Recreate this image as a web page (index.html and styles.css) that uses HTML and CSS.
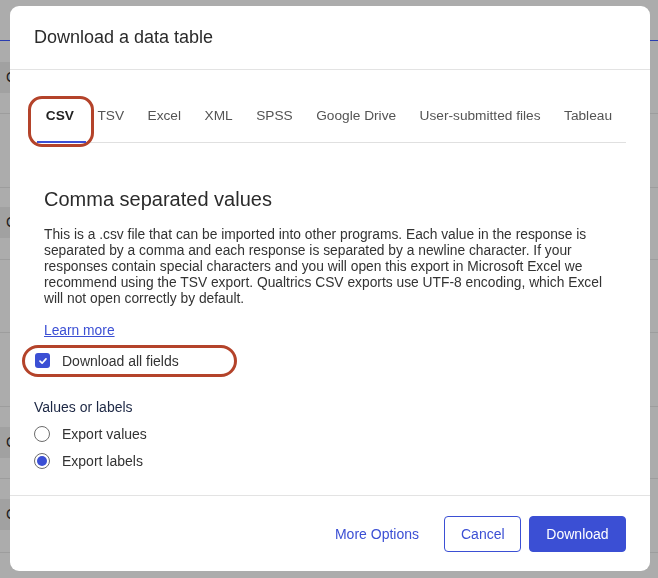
FILE: index.html
```html
<!DOCTYPE html>
<html lang="en">
<head>
  <meta charset="UTF-8">
  <meta name="viewport" content="width=device-width, initial-scale=1.0">
  <title>Download a data table</title>
  <link rel="stylesheet" href="styles.css">
</head>
<body>

<div class="page">
  <div class="page-top"></div>
  <div class="page-row r1"><div class="band">Col</div></div>
  <div class="page-row r2"></div>
  <div class="page-row r3"><div class="band">Col</div></div>
  <div class="page-row r4"></div>
  <div class="page-row r5"></div>
  <div class="page-row r6"><div class="band">Col</div></div>
  <div class="page-row r7"><div class="band">Col</div></div>
</div>

<div class="overlay">
  <div class="modal">
    <div class="modal-header">
      <h1>Download a data table</h1>
    </div>

    <div class="modal-body">
      <ul class="tabs">
        <li class="tab active">CSV<span class="mark mark-tab"></span></li>
        <li class="tab">TSV</li>
        <li class="tab">Excel</li>
        <li class="tab">XML</li>
        <li class="tab">SPSS</li>
        <li class="tab">Google Drive</li>
        <li class="tab">User-submitted files</li>
        <li class="tab">Tableau</li>
      </ul>

      <div class="panel">
        <h2>Comma separated values</h2>
        <p>This is a .csv file that can be imported into other programs. Each value in the response is separated by a comma and each response is separated by a newline character. If your responses contain special characters and you will open this export in Microsoft Excel we recommend using the TSV export. Qualtrics CSV exports use UTF-8 encoding, which Excel will not open correctly by default.</p>
        <a href="#" class="learn">Learn more</a>
      </div>

      <label class="option check-row">
        <span class="checkbox">
          <svg width="10" height="10" viewBox="0 0 10 10"><path d="M2 5.2 L4.1 7.2 L8 2.9" fill="none" stroke="#fff" stroke-width="1.7" stroke-linecap="round" stroke-linejoin="round"/></svg>
        </span>
        Download all fields
        <span class="mark mark-check"></span>
      </label>

      <div class="group-label">Values or labels</div>
      <label class="option"><span class="radio"></span>Export values</label>
      <label class="option"><span class="radio on"></span>Export labels</label>
    </div>

    <div class="modal-footer">
      <a href="#" class="more">More Options</a>
      <button class="btn btn-outline">Cancel</button>
      <button class="btn btn-primary">Download</button>
    </div>
  </div>
</div>

</body>
</html>
```

FILE: styles.css
```css
html, body {
  margin: 0;
  padding: 0;
}
body {
  font-family: "Liberation Sans", Arial, sans-serif;
  width: 658px;
  height: 578px;
  overflow: hidden;
  background-color: #acacac;
  color: #333;
}

/* page behind the dialog */
.page {
  height: 578px;
}
.page-top {
  height: 40px;
  border-bottom: 1px solid #2a3db0;
}
.page-row {
  height: 72px;
  border-bottom: 1px solid #9d9d9d;
  box-sizing: border-box;
  padding-top: 21px;
}
.page-row.r1 { height: 73px; }
.page-row.r2 { height: 74px; }
.page-row.r3 { height: 72px; padding-top: 19px; }
.page-row.r4 { height: 73px; }
.page-row.r5 { height: 74px; }
.page-row.r6 { height: 72px; padding-top: 20px; }
.page-row.r7 { height: 74px; padding-top: 20px; }
.band {
  width: 220px;
  height: 31px;
  line-height: 31px;
  background-color: #a1a1a1;
  font-size: 14px;
  padding-left: 6px;
  color: #1b1b1b;
}

/* dialog */
.overlay {
  position: fixed;
  top: 0;
  left: 0;
  right: 0;
  bottom: 0;
  padding: 6px 8px 7px 10px;
}
.modal {
  background: #fff;
  border-radius: 9px;
  height: 565px;
  display: flex;
  flex-direction: column;
  overflow: hidden;
}
.modal-header {
  height: 63px;
  border-bottom: 1px solid #e3e3e3;
  padding: 0 24px;
  display: flex;
  align-items: center;
}
.modal-header h1 {
  margin: 0;
  font-size: 18px;
  font-weight: normal;
  color: #2b2b2b;
}
.modal-body {
  flex: 1;
  padding: 29px 24px 0 24px;
}

.tabs {
  list-style: none;
  margin: 0;
  padding: 0;
  display: flex;
  border-bottom: 1px solid #e0e0e0;
}
.tab {
  position: relative;
  flex-shrink: 0;
  white-space: nowrap;
  padding: 0 11.75px;
  height: 43px;
  line-height: 34px;
  font-size: 13.7px;
  color: #545454;
}
.tab.active {
  font-weight: bold;
  color: #222;
}
.tab.active::after {
  content: "";
  position: absolute;
  left: 3px;
  right: 0;
  bottom: -1px;
  height: 2px;
  background: #3b4fd4;
}

/* red annotation rings */
.mark {
  position: absolute;
  border: 3px solid #b4432a;
  pointer-events: none;
}
.mark-tab {
  left: -6px;
  right: -8px;
  top: -3px;
  bottom: -5px;
  border-radius: 14px;
}
.mark-check {
  left: -12px;
  top: -2px;
  width: 209px;
  height: 26px;
  border-radius: 17px;
}

.panel {
  padding: 0 10px;
}
.panel h2 {
  margin: 44px 0 16px 0;
  font-size: 20px;
  line-height: 24px;
  font-weight: normal;
  color: #2b2b2b;
}
.panel p {
  margin: 0 0 14px 0;
  font-size: 13.8px;
  line-height: 16px;
  color: #333;
}
.learn {
  display: inline-block;
  font-size: 13.8px;
  line-height: 16px;
  color: #3b4fd4;
  text-decoration: underline;
}

.option {
  position: relative;
  display: flex;
  align-items: center;
  height: 27px;
  font-size: 14px;
  color: #333;
}
.check-row {
  margin-top: 8px;
  margin-bottom: 23px;
}
.checkbox {
  width: 15px;
  height: 15px;
  margin-left: 1px;
  margin-right: 12px;
  border-radius: 3px;
  background: #3b4fd4;
  display: flex;
  align-items: center;
  justify-content: center;
}
.group-label {
  font-size: 14px;
  color: #1c2744;
  height: 20px;
  line-height: 20px;
  margin-bottom: 3px;
}
.radio {
  width: 14px;
  height: 14px;
  border: 1px solid #6c6c6c;
  border-radius: 50%;
  margin-right: 12px;
  display: flex;
  align-items: center;
  justify-content: center;
}
.radio.on::after {
  content: "";
  width: 10px;
  height: 10px;
  border-radius: 50%;
  background: #3b4fd4;
}

.modal-footer {
  height: 75px;
  border-top: 1px solid #e3e3e3;
  padding: 0 24px;
  display: flex;
  align-items: center;
  justify-content: flex-end;
}
.more {
  font-size: 14px;
  color: #3b4fd4;
  text-decoration: none;
  margin-right: 25px;
}
.btn {
  font-family: "Liberation Sans", Arial, sans-serif;
  font-size: 14px;
  height: 36px;
  border-radius: 4px;
  padding: 0 16px;
  cursor: pointer;
}
.btn-outline {
  background: #fff;
  color: #3b4fd4;
  border: 1px solid #3b4fd4;
  width: 77px;
  margin-right: 8px;
}
.btn-primary {
  background: #3b4fd4;
  color: #fff;
  border: 1px solid #3b4fd4;
  width: 97px;
}
```
